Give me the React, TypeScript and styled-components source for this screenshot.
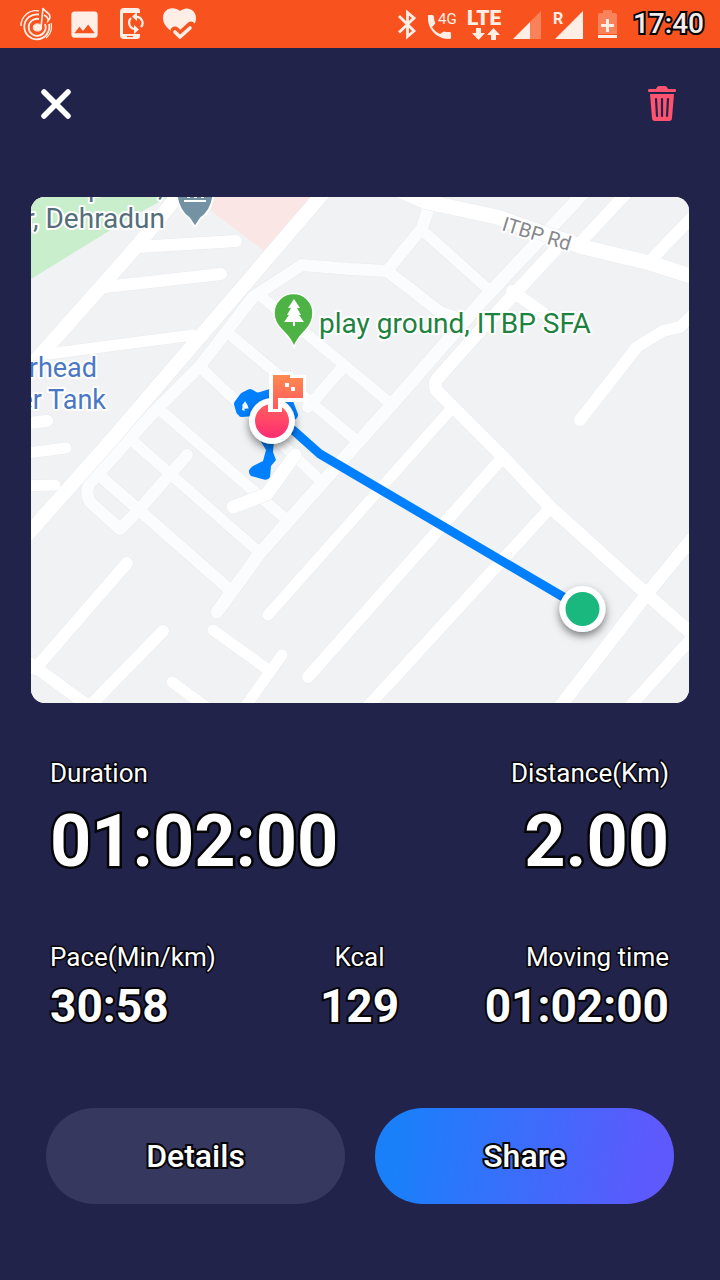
import React from 'react';
import styled, { createGlobalStyle, css } from 'styled-components';
import { MdPhoto } from 'react-icons/md';

const GlobalStyle = createGlobalStyle`
  *, *::before, *::after { box-sizing: border-box; }
  body {
    margin: 0;
    background: #22234b;
    color: #fff;
    font-family: Roboto, "Liberation Sans", sans-serif;
  }
`;

const outlined = css<{ $outline?: number }>`
  -webkit-text-stroke: ${({ $outline = 4 }) => $outline}px #050508;
  paint-order: stroke fill;
  stroke-linejoin: round;
`;

const Screen = styled.div`
  min-height: 100vh;
  display: flex;
  flex-direction: column;
`;

const StatusBar = styled.header`
  height: 48px;
  padding: 0 16px 0 12px;
  display: flex;
  align-items: center;
  justify-content: space-between;
  background: #f8531f;
  color: #ffeee6;
`;

const Notifications = styled.div`
  display: flex;
`;

const NotificationCell = styled.span`
  width: 48px;
  height: 48px;
  display: flex;
  align-items: center;
  justify-content: center;
`;

const SystemIcons = styled.div`
  display: flex;
  align-items: center;
  gap: 10px;

  svg { display: block; flex: none; }
`;

const Clock = styled.time`
  padding-left: 3px;
  color: #f4ecea;
  font-size: 28px;
  line-height: 48px;
  font-weight: 500;
  ${outlined}
`;

const Toolbar = styled.nav`
  padding: 36px 38px 73px 36px;
  display: flex;
  justify-content: space-between;
`;

const IconButton = styled.button`
  width: 40px;
  height: 40px;
  padding: 0;
  border: 0;
  background: none;
  display: flex;
  align-items: center;
  justify-content: center;
  cursor: pointer;
`;

const Content = styled.main`
  padding: 0 31px 76px;
`;

const MapCard = styled.figure`
  margin: 0 0 54px;
  border-radius: 14px;
  overflow: hidden;
  background: #f0f2f4;

  svg { display: block; width: 100%; height: auto; }
`;

const StatRow = styled.dl<{ $columns: number }>`
  margin: 0 0 ${({ $columns }) => ($columns === 2 ? 57 : 74)}px;
  padding: 0 20px 0 19px;
  display: grid;
  grid-template-columns: ${({ $columns }) => ($columns === 2 ? '1fr 1fr' : '1fr auto 1fr')};
`;

const Stat = styled.div<{ $align: 'left' | 'center' | 'right' }>`
  text-align: ${({ $align }) => $align};
`;

const StatLabel = styled.dt`
  font-size: 26px;
  line-height: 32px;
  ${outlined}
`;

const StatValue = styled.dd<{ $large?: boolean; $outline?: number }>`
  margin: ${({ $large }) => ($large ? 11 : 5)}px 0 0;
  font-size: ${({ $large }) => ($large ? 72 : 46)}px;
  line-height: ${({ $large }) => ($large ? 84 : 56)}px;
  font-weight: 700;
  ${outlined}
`;

const Actions = styled.div`
  padding: 0 15px;
  display: grid;
  grid-template-columns: 1fr 1fr;
  gap: 30px;
`;

const ActionButton = styled.button<{ $primary?: boolean }>`
  height: 96px;
  padding: 0;
  border: 0;
  border-radius: 48px;
  background: ${({ $primary }) =>
    $primary ? 'linear-gradient(96deg, #1a80fa 8%, #5e59fc 92%)' : '#37385f'};
  color: #fff;
  font-family: inherit;
  font-size: 32px;
  line-height: 40px;
  font-weight: 500;
  cursor: pointer;
  ${outlined}
`;

function MusicIcon() {
  return (
    <svg width="34" height="36" viewBox="0 0 34 36" fill="none" stroke="currentColor" aria-hidden="true">
      <path d="M2 20A15 15 0 0 1 20 5" strokeWidth="1.4" />
      <path d="M20 8.500A12.500 12.500 0 1 0 30 18" strokeWidth="1.8" />
      <path d="M20 13A8.500 8.500 0 1 0 26 18" strokeWidth="1.8" />
      <path d="M27 32A15 15 0 0 0 32 17" strokeWidth="1.2" />
      <ellipse cx="18.500" cy="21.500" rx="4.200" ry="3.600" fill="currentColor" />
      <path d="M22 22L24 2C25 6 31 6 31 11C31 13 30 14 29 15C30 11 26 10 25 9" strokeWidth="1.600" />
    </svg>
  );
}

function PhoneSyncIcon() {
  return (
    <svg width="26" height="34" viewBox="0 0 26 34" aria-hidden="true">
      <path
        d="M5 1H18Q21 1 21 4V6H4V27H21V29Q21 32 18 32H5Q1 32 1 28V5Q1 1 5 1Z"
        fill="currentColor"
      />
      <path d="M8 29.500H14" stroke="#f8531f" strokeWidth="1.200" />
      <path d="M17 10A6 6 0 0 1 22 20M12 11A6.500 6.500 0 0 0 16 22" fill="none" stroke="currentColor" strokeWidth="2.200" />
      <path d="M18 5V14L13 9.500ZM15 18V27L20 22.500Z" fill="currentColor" />
    </svg>
  );
}

function HeartCheckIcon() {
  return (
    <svg width="36" height="34" viewBox="0 0 36 34" aria-hidden="true">
      <path
        d="M18 4C12-1 1 1 1 11C1 16 4 20 9 24L16 28H22L32 18C39 5 26-3 18 4Z"
        fill="currentColor"
      />
      <path d="M12 24L18 29L30 19L36 22V34H4Z" fill="#f8531f" />
      <path d="M13 24L18 29L29 19" fill="none" stroke="#f8531f" strokeWidth="9" strokeLinecap="round" strokeLinejoin="round" />
      <path d="M13 25L18 30L28 21" fill="none" stroke="currentColor" strokeWidth="3.600" strokeLinecap="round" strokeLinejoin="round" />
    </svg>
  );
}

function BluetoothIcon() {
  return (
    <svg width="20" height="32" viewBox="-1 0 20 32" fill="none" stroke="currentColor" strokeWidth="2.800" aria-hidden="true">
      <path d="M1 8L16 23L9.500 28.500V4.500L16 10L1 24.500" />
    </svg>
  );
}

function Call4gIcon() {
  return (
    <svg width="30" height="34" viewBox="0 0 30 34" aria-hidden="true">
      <path
        d="M1 9Q0 8 2 8H5Q7 8 7 10Q7 13 8 15Q9 16 7 18L5 20Q8 25 13 27L16 25Q17 24 19 25Q21 25 23 25Q24 25 24 27V31Q24 32 22 32C9 32 0 21 1 9Z"
        fill="currentColor"
      />
      <text x="11" y="17" fontSize="15" fill="currentColor">4G</text>
    </svg>
  );
}

function LteIcon() {
  return (
    <svg width="36" height="42" viewBox="0 -5 36 42" fill="currentColor" aria-hidden="true">
      <text x="0" y="17" fontSize="21" fontWeight="900">LTE</text>
      <path d="M9 20H14V25H18L11.500 32L5 25H9ZM24 32H29V27H33L26.500 20L20 27H24Z" />
    </svg>
  );
}

function SignalIcon() {
  return (
    <svg width="28" height="32" viewBox="0 -3 28 32" fill="currentColor" aria-hidden="true">
      <path d="M17 11L28 0V28H17Z" opacity="0.3" />
      <path d="M0 28L17 11V28Z" />
    </svg>
  );
}

function RoamingSignalIcon() {
  return (
    <svg width="34" height="38" viewBox="0 -5 34 38" fill="currentColor" aria-hidden="true">
      <path d="M4 29L32 1V29Z" />
      <text x="2" y="14" fontSize="16" fontWeight="700">R</text>
    </svg>
  );
}

function BatteryIcon() {
  return (
    <svg width="25" height="30" viewBox="0 -1 25 30" fill="currentColor" aria-hidden="true">
      <path d="M8 0H17V3H20Q22 3 22 5V24H3V5Q3 3 5 3H8Z" opacity="0.3" />
      <path d="M3 25H22V28H3ZM11 9H14V14H19V17H14V22H11V17H6V14H11Z" />
    </svg>
  );
}

function CloseIcon() {
  return (
    <svg width="32" height="32" viewBox="0 0 32 32" stroke="#fff" strokeWidth="5.500" strokeLinecap="round" aria-hidden="true">
      <path d="M4 4L28 28M28 4L4 28" />
    </svg>
  );
}

function TrashIcon() {
  return (
    <svg width="30" height="36" viewBox="0 0 30 36" aria-hidden="true">
      <path d="M9 3Q10 0 12 0H18Q20 0 21 3H28Q29 3 29 5Q29 6 28 6H2Q1 6 1 5Q1 3 2 3Z" fill="#ff5370" />
      <path d="M3 8H27L25 32Q25 35 22 35H8Q5 35 5 32Z" fill="#ff5370" />
      <path d="M9 13L10 30M15 13V30M21 13L20 30" stroke="#22234b" strokeWidth="2.200" strokeLinecap="round" />
    </svg>
  );
}

const mainRoads: Array<[string, number]> = [
  ['M188 183L137 246L100 288L20 378', 14],
  ['M137 247L236 241', 12],
  ['M105 287L221 274', 12],
  ['M48 354L193 335', 11],
  ['M331 184L107 445L20 543', 14],
  ['M20 424L47 421', 12],
  ['M20 454L66 448', 11],
  ['M20 486L55 485', 11],
  ['M632 187L580 243', 12],
  ['M556 249L477 334L438 378Q432 385 439 393L503 457L550 507L650 597L700 641', 13],
  ['M390 186L427 202L497 217L583 247L650 263L700 279', 15],
  ['M700 209L650 261', 12],
  ['M512 291L543 313', 12],
  ['M700 308L680 327L663 331L637 347L580 420', 12],
  ['M503 457L308 677', 12],
  ['M550 508L360 715', 12],
  ['M452 408L268 615', 11],
  ['M700 529L650 590L552 717', 13],
  ['M700 629L624 713', 12],
  ['M127 563L35 669', 12],
  ['M20 656L94 710', 12],
  ['M163 631L84 712', 12],
  ['M213 630L267 669', 11],
  ['M282 655L240 714', 11],
  ['M172 682L213 712', 11],
  ['M295 455L267 494L233 507', 13],
];

const minorRoads: Array<[string, number]> = [
  ['M463 320L440 312L387 271L350 269L302 265L253 297L200 366L153 413L91 482Q84 490 90 502L120 529L137 512L187 455', 12],
  ['M387 271L422 228L428 210L417 187', 12],
  ['M422 230L488 289', 11],
  ['M590 186L483 300L393 403L260 553L217 612', 13],
  ['M233 337L357 441', 11],
  ['M200 367L322 482', 11],
  ['M262 297L390 403', 11],
  ['M159 409L287 520', 11],
  ['M135 443L260 553', 11],
  ['M99 475L230 590', 12],
  ['M343 367L308 407', 12],
];

function RouteMap() {
  return (
    <svg viewBox="31 197 658 506" role="img" aria-label="Route map" fontFamily='Roboto, "Liberation Sans", sans-serif'>
      <defs>
        <linearGradient id="finish" x1="0" y1="373" x2="0" y2="438" gradientUnits="userSpaceOnUse">
          <stop offset="0" stopColor="#ff8e4c" />
          <stop offset="1" stopColor="#ff2c72" />
        </linearGradient>
        <filter id="pinShadow" x="-40%" y="-40%" width="180%" height="190%">
          <feDropShadow dx="0" dy="4" stdDeviation="4" floodOpacity="0.5" />
        </filter>
      </defs>
      <rect x="31" y="197" width="658" height="506" fill="#f0f2f4" />
      <path d="M31 197H168L130 218L31 279Z" fill="#c8eecb" />
      <path d="M206 197H317L267 253L210 210Z" fill="#fae6e5" />

      <g fill="none" strokeLinecap="round" strokeLinejoin="round">
        {minorRoads.map(([d, w]) => <path key={d} d={d} stroke="#e7e9ec" strokeWidth={w + 1} />)}
        {minorRoads.map(([d, w]) => <path key={d} d={d} stroke="#fbfcfd" strokeWidth={w} />)}
        {mainRoads.map(([d, w]) => <path key={d} d={d} stroke="#e9ebee" strokeWidth={w + 1} />)}
        {mainRoads.map(([d, w]) => <path key={d} d={d} stroke="#fff" strokeWidth={w} />)}
      </g>

      <path d="M176 190Q177 210 189 218L195 227L201 218Q213 210 214 190Z" fill="#7393a5" stroke="#fff" strokeWidth="2" />
      <path d="M184 201H206M187 197H190M194 197H197M201 197H204" stroke="#fff" strokeWidth="2" />

      <g paintOrder="stroke" stroke="#fff" strokeWidth="4" strokeLinejoin="round" fontSize="28">
        <g fill="#546e7a">
          <text x="88" y="196">p</text>
          <text x="158" y="196">,</text>
          <text x="165" y="228" textAnchor="end">r, Dehradun</text>
        </g>
        <g fill="#4a78c4" fontSize="27">
          <text x="97" y="377" textAnchor="end">erhead</text>
          <text x="106" y="409" textAnchor="end">er Tank</text>
        </g>
        <text x="319" y="333" fill="#1e8240">play ground, ITBP SFA</text>
        <text transform="translate(501 230) rotate(17)" fill="#85888d" fontSize="20">ITBP Rd</text>
      </g>

      <path
        d="M294 347Q291 339 283 331Q274 323 274 313A19.500 19.500 0 0 1 313 313Q313 323 305 331Q297 339 294 347Z"
        fill="#4db344" stroke="#fff" strokeWidth="1.500"
      />
      <path d="M294 299L300 308H297L301 315H299L304 322H295V326H293V322H284L289 315H287L291 308H288Z" fill="#fff" />

      <g fill="none" stroke="#0080ff" strokeLinejoin="round" strokeLinecap="round">
        <path d="M240 411L238 404L244 396L250 393L257 397L270 393M242 413L254 412L250 400L262 400L256 412" strokeWidth="8" />
        <path d="M250 400L262 398L275 396L288 402L293 415" strokeWidth="10" />
        <path d="M293 430L320 454L582 608" strokeWidth="9" strokeLinejoin="miter" />
      </g>
      <path d="M260 440H274L273 452L276 460L271 466L270 477Q268 481 262 479L251 476Q246 471 253 466L263 461L266 450Z" fill="#0080ff" />
      <path d="M242 410L243 404L246 403L244 408L245 411Z" fill="#f0f2f4" />

      <g filter="url(#pinShadow)">
        <circle cx="272" cy="421" r="23" fill="#fff" />
      </g>
      <path d="M271 374H291V377H304V400H280V413H271Z" fill="#fff" stroke="#fff" strokeWidth="4" />
      <circle cx="272" cy="421" r="17" fill="url(#finish)" />
      <path d="M268 400H282V412H268Z" fill="#fff" />
      <path d="M273 375H290V378H303V398H278V409H273Z" fill="url(#finish)" />
      <path d="M285 383H289V387H285ZM291 387H295V391H291Z" fill="#fff" />

      <g filter="url(#pinShadow)">
        <circle cx="582.500" cy="609" r="23" fill="#fff" />
      </g>
      <circle cx="582.500" cy="609" r="17" fill="#1ab87e" />
    </svg>
  );
}

export default function App() {
  return (
    <Screen>
      <GlobalStyle />
      <StatusBar>
        <Notifications>
          <NotificationCell><MusicIcon /></NotificationCell>
          <NotificationCell><MdPhoto size={35} /></NotificationCell>
          <NotificationCell><PhoneSyncIcon /></NotificationCell>
          <NotificationCell><HeartCheckIcon /></NotificationCell>
        </Notifications>
        <SystemIcons>
          <BluetoothIcon />
          <Call4gIcon />
          <LteIcon />
          <SignalIcon />
          <RoamingSignalIcon />
          <BatteryIcon />
          <Clock>17:40</Clock>
        </SystemIcons>
      </StatusBar>

      <Toolbar>
        <IconButton type="button" aria-label="Close"><CloseIcon /></IconButton>
        <IconButton type="button" aria-label="Delete"><TrashIcon /></IconButton>
      </Toolbar>

      <Content>
        <MapCard><RouteMap /></MapCard>

        <StatRow $columns={2}>
          <Stat $align="left">
            <StatLabel $outline={3}>Duration</StatLabel>
            <StatValue $large $outline={5}>01:02:00</StatValue>
          </Stat>
          <Stat $align="right">
            <StatLabel $outline={3}>Distance(Km)</StatLabel>
            <StatValue $large $outline={5}>2.00</StatValue>
          </Stat>
        </StatRow>

        <StatRow $columns={3}>
          <Stat $align="left">
            <StatLabel $outline={3}>Pace(Min/km)</StatLabel>
            <StatValue>30:58</StatValue>
          </Stat>
          <Stat $align="center">
            <StatLabel $outline={3}>Kcal</StatLabel>
            <StatValue>129</StatValue>
          </Stat>
          <Stat $align="right">
            <StatLabel $outline={3}>Moving time</StatLabel>
            <StatValue>01:02:00</StatValue>
          </Stat>
        </StatRow>

        <Actions>
          <ActionButton type="button">Details</ActionButton>
          <ActionButton type="button" $primary>Share</ActionButton>
        </Actions>
      </Content>
    </Screen>
  );
}
